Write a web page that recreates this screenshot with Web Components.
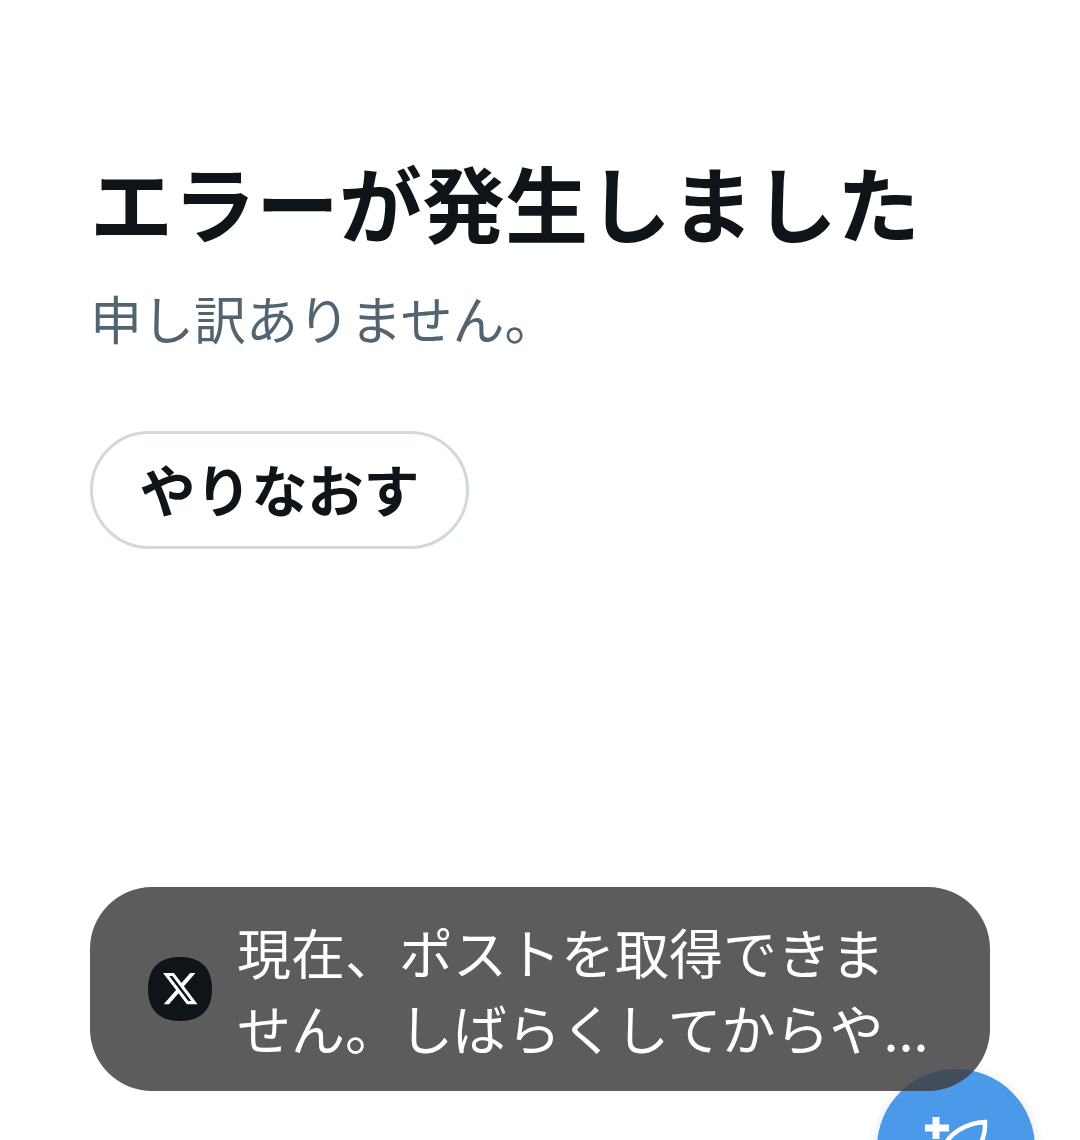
<!DOCTYPE html>
<html lang="ja">
<head>
<meta charset="utf-8">
<title>エラー</title>
<style>
  html, body { margin: 0; height: 100%; background: #fff; overflow: hidden; }
  body { font-family: "Noto Sans CJK JP", "Noto Sans", sans-serif; }
</style>
</head>
<body>
<error-screen>
  <span slot="title">エラーが発生しました</span>
  <span slot="message">申し訳ありません。</span>
  <retry-button>やりなおす</retry-button>
</error-screen>
<compose-fab></compose-fab>
<toast-bar>現在、ポストを取得できません。しばらくしてからや...</toast-bar>

<script>
// Error message with a retry button
class ErrorScreen extends HTMLElement {
  constructor() {
    super();
    this.attachShadow({ mode: 'open' });
    this.shadowRoot.innerHTML = `
      <style>
        :host { display: block; padding: 151px 90px 0; }
        h1 {
          margin: 0;
          font-size: 83px;
          line-height: 100px;
          font-weight: 700;
          color: #0f1419;
          white-space: nowrap;
        }
        p {
          margin: 34px 0 80px;
          font-size: 52px;
          line-height: 66px;
          font-weight: 400;
          color: #536471;
          white-space: nowrap;
        }
      </style>
      <h1><slot name="title"></slot></h1>
      <p><slot name="message"></slot></p>
      <slot></slot>
    `;
  }
}

class RetryButton extends HTMLElement {
  constructor() {
    super();
    this.attachShadow({ mode: 'open' });
    this.shadowRoot.innerHTML = `
      <style>
        :host {
          display: inline-flex;
          align-items: center;
          justify-content: center;
          box-sizing: border-box;
          width: 379px;
          height: 118px;
          padding-bottom: 6px;
          border: 3px solid #cfd9de;
          border-radius: 59px;
          background: #fff;
          color: #0f1419;
          font-size: 56px;
          font-weight: 700;
          white-space: nowrap;
        }
      </style>
      <slot></slot>
    `;
  }
}

// Toast lies over the page, and over the compose button
class ToastBar extends HTMLElement {
  constructor() {
    super();
    this.attachShadow({ mode: 'open' });
    this.shadowRoot.innerHTML = `
      <style>
        :host {
          position: absolute;
          left: 90px;
          top: 887px;
          box-sizing: border-box;
          width: 900px;
          height: 204px;
          display: flex;
          align-items: center;
          gap: 25px;
          padding: 0 53px 0 58px;
          border-radius: 62px;
          background: rgba(63, 63, 66, 0.85);
          color: #fff;
        }
        svg { flex: none; width: 64px; height: 64px; }
        .text {
          margin-top: 2px;
          font-size: 54px;
          line-height: 76px;
          font-weight: 400;
        }
      </style>
      <svg viewBox="0 0 64 64">
        <path fill="#0f1419" d="M32 0C52 0 64 10 64 32C64 54 52 64 32 64C12 64 0 54 0 32C0 10 12 0 32 0Z"/>
        <path fill="#fff" transform="translate(13 12.400) scale(1.600)" d="M18.244 2.250h3.308l-7.227 8.260 8.502 11.240H16.170l-5.214-6.817L4.990 21.750H1.680l7.730-8.835L1.254 2.250H8.080l4.713 6.231zm-1.161 17.520h1.833L7.084 4.126H5.117z"/>
      </svg>
      <div class="text"><slot></slot></div>
    `;
  }
}

// Compose button, cut off by the bottom of the window
class ComposeFab extends HTMLElement {
  constructor() {
    super();
    this.attachShadow({ mode: 'open' });
    this.shadowRoot.innerHTML = `
      <style>
        :host {
          position: absolute;
          left: 857px;
          top: 1049px;
          width: 198px;
          height: 91px;
          overflow: hidden;
        }
        .disc {
          position: relative;
          margin: 20px;
          width: 158px;
          height: 158px;
          border-radius: 50%;
          background: #4b99e9;
          box-shadow: 0 2px 12px rgba(0, 0, 0, 0.12);
        }
        svg { position: absolute; left: 46px; top: 46px; width: 70px; height: 70px; }
      </style>
      <div class="disc">
        <svg viewBox="0 0 70 70" fill="none" stroke="#fff">
          <path stroke-width="7" d="M13 2v22M2 13h24"/>
          <path stroke-width="4.500" d="M20 36C24 18 44 8 62 7C63 26 52 42 36 44C30 45 25 44 20 40"/>
        </svg>
      </div>
    `;
  }
}

customElements.define('error-screen', ErrorScreen);
customElements.define('retry-button', RetryButton);
customElements.define('toast-bar', ToastBar);
customElements.define('compose-fab', ComposeFab);
</script>
</body>
</html>
